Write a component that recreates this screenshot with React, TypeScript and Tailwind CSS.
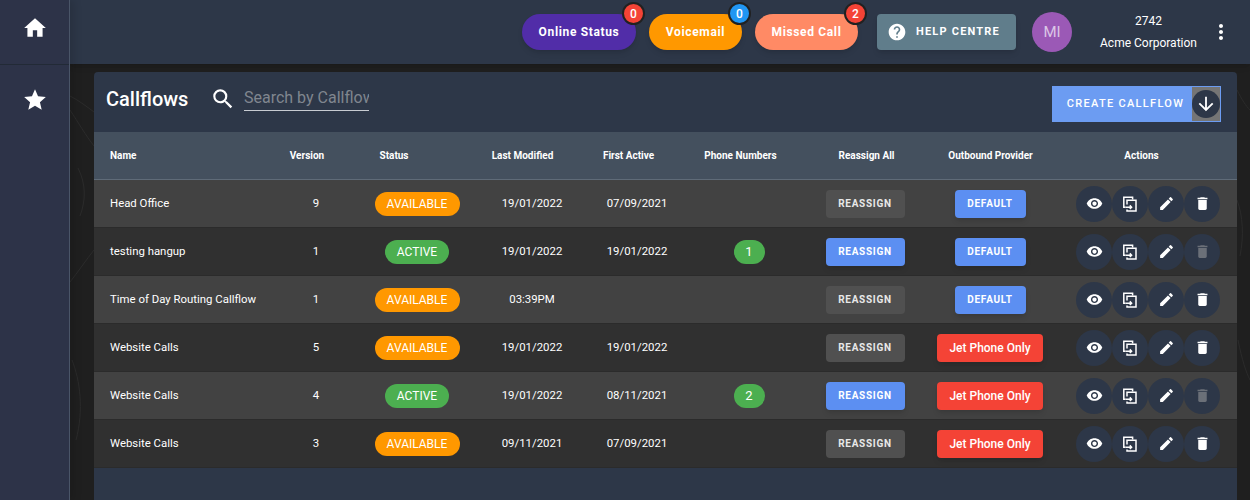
import { MdHome, MdStar, MdSearch, MdHelp, MdMoreVert, MdVisibility, MdEdit, MdDelete, MdArrowDownward } from 'react-icons/md'

type Flow = {
  name: string
  version: number
  status: 'AVAILABLE' | 'ACTIVE'
  modified: string
  firstActive: string
  phones?: number
  provider: 'DEFAULT' | 'Jet Phone Only'
}

const flows: Flow[] = [
  { name: 'Head Office', version: 9, status: 'AVAILABLE', modified: '19/01/2022', firstActive: '07/09/2021', provider: 'DEFAULT' },
  { name: 'testing hangup', version: 1, status: 'ACTIVE', modified: '19/01/2022', firstActive: '19/01/2022', phones: 1, provider: 'DEFAULT' },
  { name: 'Time of Day Routing Callflow', version: 1, status: 'AVAILABLE', modified: '03:39PM', firstActive: '', provider: 'DEFAULT' },
  { name: 'Website Calls', version: 5, status: 'AVAILABLE', modified: '19/01/2022', firstActive: '19/01/2022', provider: 'Jet Phone Only' },
  { name: 'Website Calls', version: 4, status: 'ACTIVE', modified: '19/01/2022', firstActive: '08/11/2021', phones: 2, provider: 'Jet Phone Only' },
  { name: 'Website Calls', version: 3, status: 'AVAILABLE', modified: '09/11/2021', firstActive: '07/09/2021', provider: 'Jet Phone Only' },
]

const cols = 'grid grid-cols-[172px_100px_102px_128px_82px_142px_92px_156px_169px] items-center'

// faint contour lines of the page background, only seen in the gutters
function Contours() {
  return (
    <svg className="absolute inset-0" width="1250" height="500" fill="none" stroke="#2b2b2b" strokeWidth="1">
      <path d="M70 96C78 100 86 106 94 112" />
      <path d="M70 110C78 122 86 136 94 146" />
      <path d="M78 168C86 184 86 200 80 216" />
      <path d="M70 282C78 272 86 260 94 250" />
      <path d="M72 360C80 380 84 410 76 440" />
      <path d="M1237 90C1242 100 1246 106 1250 110" />
      <path d="M1237 200C1243 216 1244 236 1240 256" />
      <path d="M1238 340C1242 360 1246 372 1250 380" />
    </svg>
  )
}

function CopyIcon() {
  return (
    <svg width="18" height="18" viewBox="0 0 18 18" fill="none" stroke="currentColor" strokeWidth="1.5">
      <path d="M4.6 12.2H2.8V2.2H11.6V4.6" />
      <path d="M6 9.6V5.2H15V16H6V14.4" />
      <path d="M4.6 12.2H10.6M8.8 10.4L10.6 12.2L8.8 14" />
    </svg>
  )
}

function StatusPill({ label, badge, className, badgeClass }: { label: string; badge: number; className: string; badgeClass: string }) {
  return (
    <div className={`relative h-9 rounded-[18px] flex items-center justify-center text-white text-xs font-bold tracking-[0.65px] shadow-md ${className}`}>
      {label}
      <span className={`absolute -top-[12px] -right-[9px] w-[23px] h-[23px] rounded-full border-2 border-[#212121] flex items-center justify-center text-[12px] font-medium tracking-normal ${badgeClass}`}>
        {badge}
      </span>
    </div>
  )
}

function ActionButton({ children, muted }: { children: React.ReactNode; muted?: boolean }) {
  return (
    <div className={`w-9 h-9 rounded-full bg-[#2d3748] flex items-center justify-center ${muted ? 'text-[#6b7078]' : 'text-white'}`}>
      {children}
    </div>
  )
}

function Row({ flow, index }: { flow: Flow; index: number }) {
  const active = flow.status === 'ACTIVE'
  return (
    <div className={`${cols} h-12 text-[11.4px] text-white border-b border-[#2b2b2b] ${index % 2 === 0 ? 'bg-[#424242]' : 'bg-[#303030]'}`}>
      <div className="pl-4 whitespace-nowrap">{flow.name}</div>
      <div className="text-center">{flow.version}</div>
      <div className="flex justify-center">
        <span className={`h-6 rounded-xl flex items-center justify-center pt-px text-[12px] ${active ? 'w-[64px] bg-[#4caf50]' : 'w-[85px] bg-[#ff9800]'}`}>{flow.status}</span>
      </div>
      <div className="text-center">{flow.modified}</div>
      <div className="text-center">{flow.firstActive}</div>
      <div className="flex justify-center">
        {flow.phones && <span className="h-6 w-[31px] rounded-xl bg-[#4caf50] flex items-center justify-center text-[13px]">{flow.phones}</span>}
      </div>
      <div className="flex justify-center pr-[2px]">
        <button className={`h-7 w-[79px] rounded text-[10px] font-bold tracking-[0.7px] ${active ? 'bg-[#5c8ff2] shadow-md' : 'bg-[#505050] text-[#e8e8e8]'}`}>REASSIGN</button>
      </div>
      <div className="flex justify-center">
        {flow.provider === 'DEFAULT' ? (
          <button className="h-7 w-[71px] rounded bg-[#5c8ff2] text-[10px] font-bold tracking-[0.7px] shadow-md">DEFAULT</button>
        ) : (
          <button className="h-7 w-[106px] pt-px rounded bg-[#f44336] text-[12px] font-medium shadow-md">Jet Phone Only</button>
        )}
      </div>
      <div className="flex pl-2">
        <ActionButton><MdVisibility size={17} /></ActionButton>
        <ActionButton><CopyIcon /></ActionButton>
        <ActionButton><MdEdit size={17} /></ActionButton>
        <ActionButton muted={active}><MdDelete size={17} /></ActionButton>
      </div>
    </div>
  )
}

export default function App() {
  return (
    <div className="relative h-[500px] w-[1250px] overflow-hidden flex bg-[#1f1f1f] font-['Roboto',sans-serif]">
      <Contours />
      <aside className="relative z-10 w-[70px] shrink-0 bg-[#2d3348] border-r border-[#4a5568] text-white shadow-[4px_0_8px_rgba(0,0,0,0.12)]">
        <div className="h-[65px] flex items-center justify-center border-b border-[#222a36] pb-[9px]">
          <MdHome size={26} />
        </div>
        <div className="flex justify-center pt-[22px]">
          <MdStar size={26} />
        </div>
      </aside>

      <div className="relative flex-1 min-w-0 flex flex-col">
        <header className="h-16 shrink-0 bg-[#2d3748] shadow-md flex items-center text-white">
          <div className="ml-auto flex items-center">
            <div className="flex gap-[13px]">
              <StatusPill label="Online Status" badge={0} className="w-[114px] bg-[#512da8]" badgeClass="bg-[#f44336]" />
              <StatusPill label="Voicemail" badge={0} className="w-[93px] bg-[#ff9800]" badgeClass="bg-[#2196f3]" />
              <StatusPill label="Missed Call" badge={2} className="w-[103px] bg-[#ff8a65]" badgeClass="bg-[#f44336]" />
            </div>
            <button className="ml-[19px] h-9 w-[139px] pr-[6px] rounded bg-[#607d8b] flex items-center justify-center gap-[9px] text-[11px] font-bold tracking-[1.2px] shadow-md">
              <MdHelp size={20} />
              HELP CENTRE
            </button>
            <div className="ml-4 w-10 h-10 rounded-full bg-[#9b59b6] flex items-center justify-center text-[15px] text-[#dcc6e6]">MI</div>
            <div className="ml-2 w-[137px] flex flex-col items-center text-xs gap-[7px] pt-px">
              <span className="leading-[15px]">2742</span>
              <span className="leading-[15px]">Acme Corporation</span>
            </div>
            <div className="w-[33px]">
              <MdMoreVert size={24} className="-ml-[8px]" />
            </div>
          </div>
        </header>

        <main className="flex-1 mt-2 ml-6 mr-[13px] rounded-t bg-[#2d3748] text-white overflow-hidden">
          <div className="h-[60px] flex items-center pl-3 pr-4 pb-[6px]">
            <h1 className="text-[20px] font-medium w-[104px]">Callflows</h1>
            <MdSearch size={26} className="shrink-0" />
            <input
              readOnly
              placeholder="Search by Callflow"
              className="ml-[8px] w-[125px] h-[26px] -mt-[2px] bg-transparent border-b border-[#c8ccd2] text-[16px] placeholder:text-[#80868f] outline-none"
            />
            <button className="ml-auto mt-[10px] h-9 w-[169px] border border-[#6c9cf2] bg-[#6c9cf2] flex items-center text-[11px] font-medium tracking-[1.3px]">
              <span className="flex-1 text-center pl-[6px]">CREATE CALLFLOW</span>
              <span className="w-7 h-[34px] bg-[#757575] flex items-center justify-center">
                <span className="w-7 h-7 shrink-0 rounded-full bg-[#2d3748] flex items-center justify-center"><MdArrowDownward size={22} /></span>
              </span>
            </button>
          </div>

          <div className={`${cols} h-[48px] bg-[#44505e] border-b border-[#5f6b78] text-[10px] font-bold`}>
            <div className="pl-4">Name</div>
            <div className="text-center pr-[18px]">Version</div>
            <div className="text-center pr-[46px]">Status</div>
            <div className="text-center pr-[19px]">Last Modified</div>
            <div className="text-center pr-[17px] whitespace-nowrap">First Active</div>
            <div className="text-center pr-[17px]">Phone Numbers</div>
            <div className="text-center pl-[1px] whitespace-nowrap">Reassign All</div>
            <div className="text-center pl-[1px] whitespace-nowrap">Outbound Provider</div>
            <div className="text-center pr-[22px]">Actions</div>
          </div>

          {flows.map((flow, i) => (
            <Row key={`${flow.name}-${flow.version}`} flow={flow} index={i} />
          ))}
        </main>
      </div>
    </div>
  )
}
